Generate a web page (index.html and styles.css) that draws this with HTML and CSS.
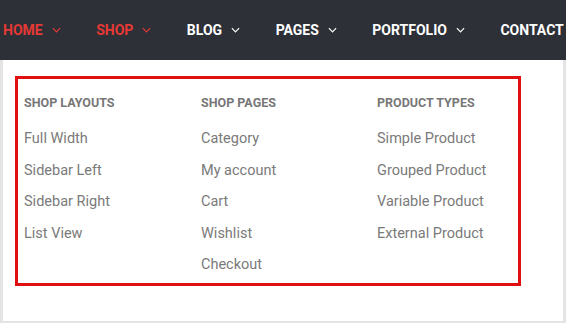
FILE: index.html
```html
<!DOCTYPE html>
<html lang="en">
<head>
    <meta charset="UTF-8">
    <meta name="viewport" content="width=device-width, initial-scale=1.0">
    <title>Shop menu</title>
    <link rel="stylesheet" href="styles.css">
</head>
<body>
    <nav class="nav">
        <ul class="nav-list">
            <li class="nav-item active">Home <svg class="chev" viewBox="0 0 10 6"><path d="M1 1l4 4 4-4"/></svg></li>
            <li class="nav-item active">Shop <svg class="chev" viewBox="0 0 10 6"><path d="M1 1l4 4 4-4"/></svg></li>
            <li class="nav-item">Blog <svg class="chev" viewBox="0 0 10 6"><path d="M1 1l4 4 4-4"/></svg></li>
            <li class="nav-item">Pages <svg class="chev" viewBox="0 0 10 6"><path d="M1 1l4 4 4-4"/></svg></li>
            <li class="nav-item">Portfolio <svg class="chev" viewBox="0 0 10 6"><path d="M1 1l4 4 4-4"/></svg></li>
            <li class="nav-item">Contact</li>
        </ul>
    </nav>

    <div class="mega">
        <div class="mega-box">
            <div class="mega-col">
                <h4 class="mega-title">Shop Layouts</h4>
                <ul class="mega-links">
                    <li>Full Width</li>
                    <li>Sidebar Left</li>
                    <li>Sidebar Right</li>
                    <li>List View</li>
                </ul>
            </div>
            <div class="mega-col">
                <h4 class="mega-title">Shop Pages</h4>
                <ul class="mega-links">
                    <li>Category</li>
                    <li>My account</li>
                    <li>Cart</li>
                    <li>Wishlist</li>
                    <li>Checkout</li>
                </ul>
            </div>
            <div class="mega-col">
                <h4 class="mega-title">Product Types</h4>
                <ul class="mega-links">
                    <li>Simple Product</li>
                    <li>Grouped Product</li>
                    <li>Variable Product</li>
                    <li>External Product</li>
                </ul>
            </div>
        </div>
    </div>
</body>
</html>
```

FILE: styles.css
```css
body{
    margin: 0px;
    background-color: #e4e4e4;
    font-family: Roboto, "Liberation Sans", sans-serif;
    overflow: hidden;
}
ul{
    list-style: none;
    margin: 0px;
    padding: 0px;
}
.nav{
    background-color: #2d3037;
    height: 60px;
}
.nav-list{
    display: flex;
    align-items: center;
    height: 100%;
    padding-left: 3px;
    padding-bottom: 1px;
    box-sizing: border-box;
    gap: 35.5px;
    white-space: nowrap;
}
.nav-item{
    display: flex;
    align-items: center;
    gap: 9px;
    color: #ffffff;
    font-weight: 700;
    font-size: 14px;
    text-transform: uppercase;
}
.nav-item.active{
    color: #e53935;
}
.chev{
    width: 9px;
    height: 6px;
    fill: none;
    stroke: currentColor;
    stroke-width: 1.3;
}
.mega{
    background-color: #ffffff;
    margin: 0px 3px;
    height: 261px;
    padding: 16px 42px 0px 12px;
    box-sizing: border-box;
}
.mega-box{
    display: grid;
    grid-template-columns: 177px 176px 1fr;
    border: 3px solid #e01010;
    height: 210px;
    box-sizing: border-box;
    padding: 16px 6px 0px 6px;
}
.mega-title{
    margin: 0px 0px 13px 0px;
    font-size: 12.5px;
    font-weight: 700;
    color: #777777;
    text-transform: uppercase;
}
.mega-links li{
    font-size: 14.5px;
    color: #7a7a7a;
    line-height: 31.5px;
}
```
